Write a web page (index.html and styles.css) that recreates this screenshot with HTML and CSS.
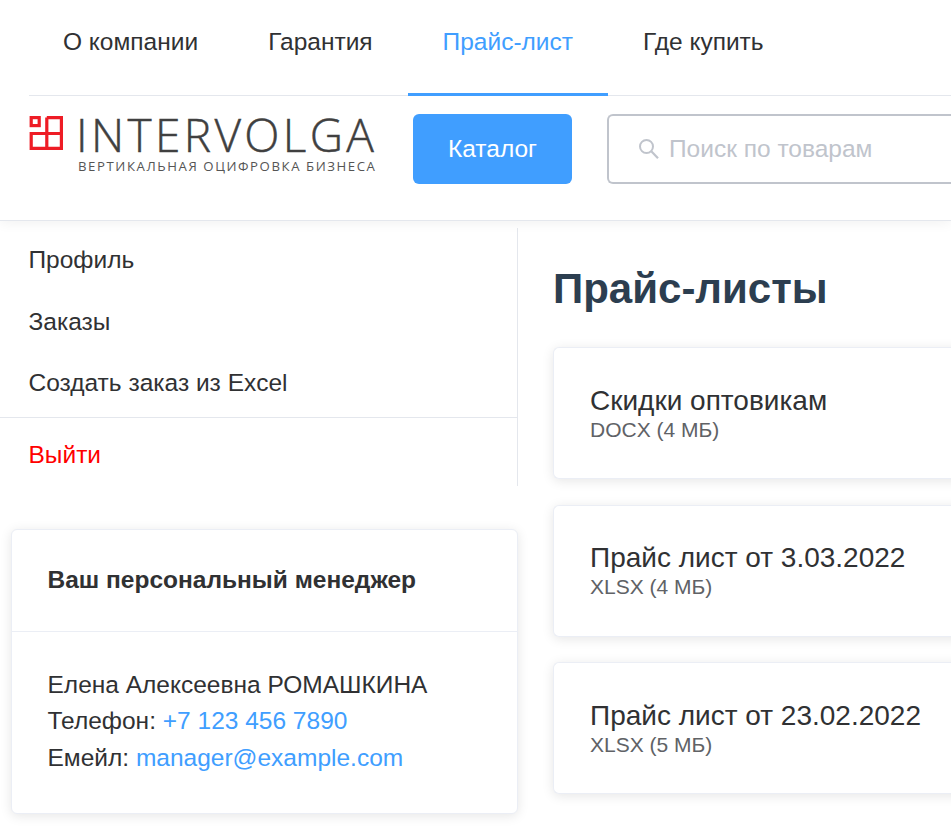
FILE: index.html
```html
<!DOCTYPE html>
<html lang="ru">
<head>
<meta charset="utf-8">
<title>Прайс-листы</title>
<link rel="stylesheet" href="styles.css">
</head>
<body>
<header class="header">
  <nav class="topnav">
    <a class="topnav-item" href="#">О компании</a>
    <a class="topnav-item" href="#">Гарантия</a>
    <a class="topnav-item active" href="#">Прайс-лист</a>
    <a class="topnav-item" href="#">Где купить</a>
  </nav>
  <div class="headbar">
    <a class="logo" href="#">
      <svg class="logo-mark" width="34" height="34" viewBox="0 0 34 34">
        <g fill="none" stroke="#ee1c25" stroke-width="3.2">
          <rect x="2.2" y="1.6" width="8" height="8"/>
          <path d="M17.8 1.6H32.4V32.4H2.2V17.5H32.4M17.8 1.6V32.4"/>
        </g>
      </svg>
      <span class="logo-text">
        <span class="logo-name">INTERVOLGA</span>
        <span class="logo-tag">ВЕРТИКАЛЬНАЯ ОЦИФРОВКА БИЗНЕСА</span>
      </span>
    </a>
    <a class="catalog-btn" href="#">Каталог</a>
    <div class="search">
      <svg class="search-icon" width="20" height="20" viewBox="0 0 20 20">
        <circle cx="7.5" cy="7.5" r="6.5" fill="none" stroke="#c0c4cc" stroke-width="2"/>
        <path d="M12.3 12.3L19 19.2" stroke="#c0c4cc" stroke-width="2.2" fill="none"/>
      </svg>
      <span class="search-text">Поиск по товарам</span>
    </div>
  </div>
</header>
<div class="content">
  <aside class="side">
    <ul class="menu">
      <li class="menu-item"><a href="#">Профиль</a></li>
      <li class="menu-item"><a href="#">Заказы</a></li>
      <li class="menu-item last"><a href="#">Создать заказ из Excel</a></li>
      <li class="menu-item exit"><a href="#">Выйти</a></li>
    </ul>
    <section class="manager">
      <div class="manager-head">Ваш персональный менеджер</div>
      <div class="manager-body">
        <div>Елена Алексеевна РОМАШКИНА</div>
        <div>Телефон: <a href="#">+7 123 456 7890</a></div>
        <div>Емейл: <a href="#">manager@example.com</a></div>
      </div>
    </section>
  </aside>
  <main class="main">
    <h1 class="title">Прайс-листы</h1>
    <a class="doc" href="#"><span class="doc-name">Скидки оптовикам</span><span class="doc-meta">DOCX (4 МБ)</span></a>
    <a class="doc" href="#"><span class="doc-name">Прайс лист от 3.03.2022</span><span class="doc-meta">XLSX (4 МБ)</span></a>
    <a class="doc" href="#"><span class="doc-name">Прайс лист от 23.02.2022</span><span class="doc-meta">XLSX (5 МБ)</span></a>
  </main>
</div>
</body>
</html>
```
FILE: styles.css
```css
* { box-sizing: border-box; }
html, body { margin: 0; width: 951px; height: 836px; overflow: hidden; }
body {
  background: #fff;
  color: #303133;
  font-family: "Liberation Sans", Arial, sans-serif;
  font-size: 24.5px;
}
a { color: inherit; text-decoration: none; }

.header {
  height: 221px;
  padding-left: 29px;
  border-bottom: 1px solid #e4e7ed;
  box-shadow: 0 2px 12px rgba(0, 0, 0, .06);
  position: relative;
  background: #fff;
}
.topnav {
  display: flex;
  height: 96px;
  border-bottom: 1px solid #e4e7ed;
}
.topnav-item {
  padding: 0 35px;
  line-height: 84px;
  height: 96px;
}
.topnav-item:first-child { padding-left: 34px; }
.topnav-item.active {
  color: #409eff;
  border-bottom: 3px solid #409eff;
}
.headbar {
  display: flex;
  align-items: flex-start;
  padding-top: 18px;
  width: 922px;
}
.logo { display: flex; width: 384px; padding-top: 2px; flex: none; }
.logo-mark { flex: none; }
.logo-text { display: flex; flex-direction: column; margin-left: 13px; }
.logo-name {
  font-family: "Open Sans", sans-serif;
  font-weight: 300;
  font-size: 46px;
  line-height: 36px;
  letter-spacing: 3.35px;
  color: #404040;
  -webkit-text-stroke: .45px #404040;
  white-space: nowrap;
}
.logo-tag {
  font-family: "Open Sans", sans-serif;
  font-size: 13.2px;
  line-height: 16px;
  letter-spacing: 1.57px;
  color: #555;
  margin: 6px 0 0 2px;
  white-space: nowrap;
}
.catalog-btn {
  width: 159px;
  height: 70px;
  line-height: 69px;
  text-align: center;
  background: #409eff;
  color: #fff;
  border-radius: 6px;
  flex: none;
}
.search {
  margin-left: 35px;
  width: 400px;
  height: 70px;
  border: 2px solid #c0c4cc;
  border-right: 0;
  border-radius: 6px 0 0 6px;
  display: flex;
  align-items: center;
  padding-left: 30px;
  flex: none;
}
.search-icon { flex: none; }
.search-text { margin-left: 10px; color: #c0c4cc; white-space: nowrap; }

.content { display: flex; align-items: flex-start; }
.side { width: 518px; flex: none; }
.menu {
  list-style: none;
  margin: 7px 0 0;
  padding: 1px 0 0;
  height: 258px;
  border-right: 1px solid #e4e7ed;
}
.menu-item { height: 61.5px; line-height: 61.5px; padding-left: 28.5px; }
.menu-item.last { height: 66px; line-height: 61.5px; border-bottom: 1px solid #e4e7ed; }
.menu-item.exit { color: #f00; height: 68px; line-height: 74px; }

.manager {
  margin: 43px 0 0 11px;
  width: 507px;
  height: 285px;
  border: 1px solid #ebeef5;
  border-radius: 6px;
  box-shadow: 0 2px 12px rgba(0, 0, 0, .1);
  background: #fff;
}
.manager-head {
  height: 102px;
  padding: 0 35.5px;
  line-height: 100px;
  font-weight: 700;
  border-bottom: 1px solid #ebeef5;
}
.manager-body { padding: 34.5px 35.5px; line-height: 36.75px; }
.manager-body a { color: #409eff; }

.main { width: 433px; flex: none; padding-left: 35px; overflow: hidden; padding-bottom: 20px; }
.title {
  margin: 42px 0 0;
  height: 84px;
  font-size: 42px;
  line-height: 52px;
  font-weight: 700;
  color: #2c3e50;
}
.doc {
  display: flex;
  flex-direction: column;
  justify-content: center;
  width: 440px;
  height: 132px;
  margin-bottom: 25.5px;
  padding: 0 36px 1px;
  border: 1px solid #ebeef5;
  border-right: 0;
  border-radius: 6px 0 0 6px;
  box-shadow: 0 2px 12px rgba(0, 0, 0, .1);
  background: #fff;
}
.doc-name { font-size: 28px; line-height: 33px; }
.doc-meta { font-size: 21px; line-height: 25px; color: #606266; }
```
